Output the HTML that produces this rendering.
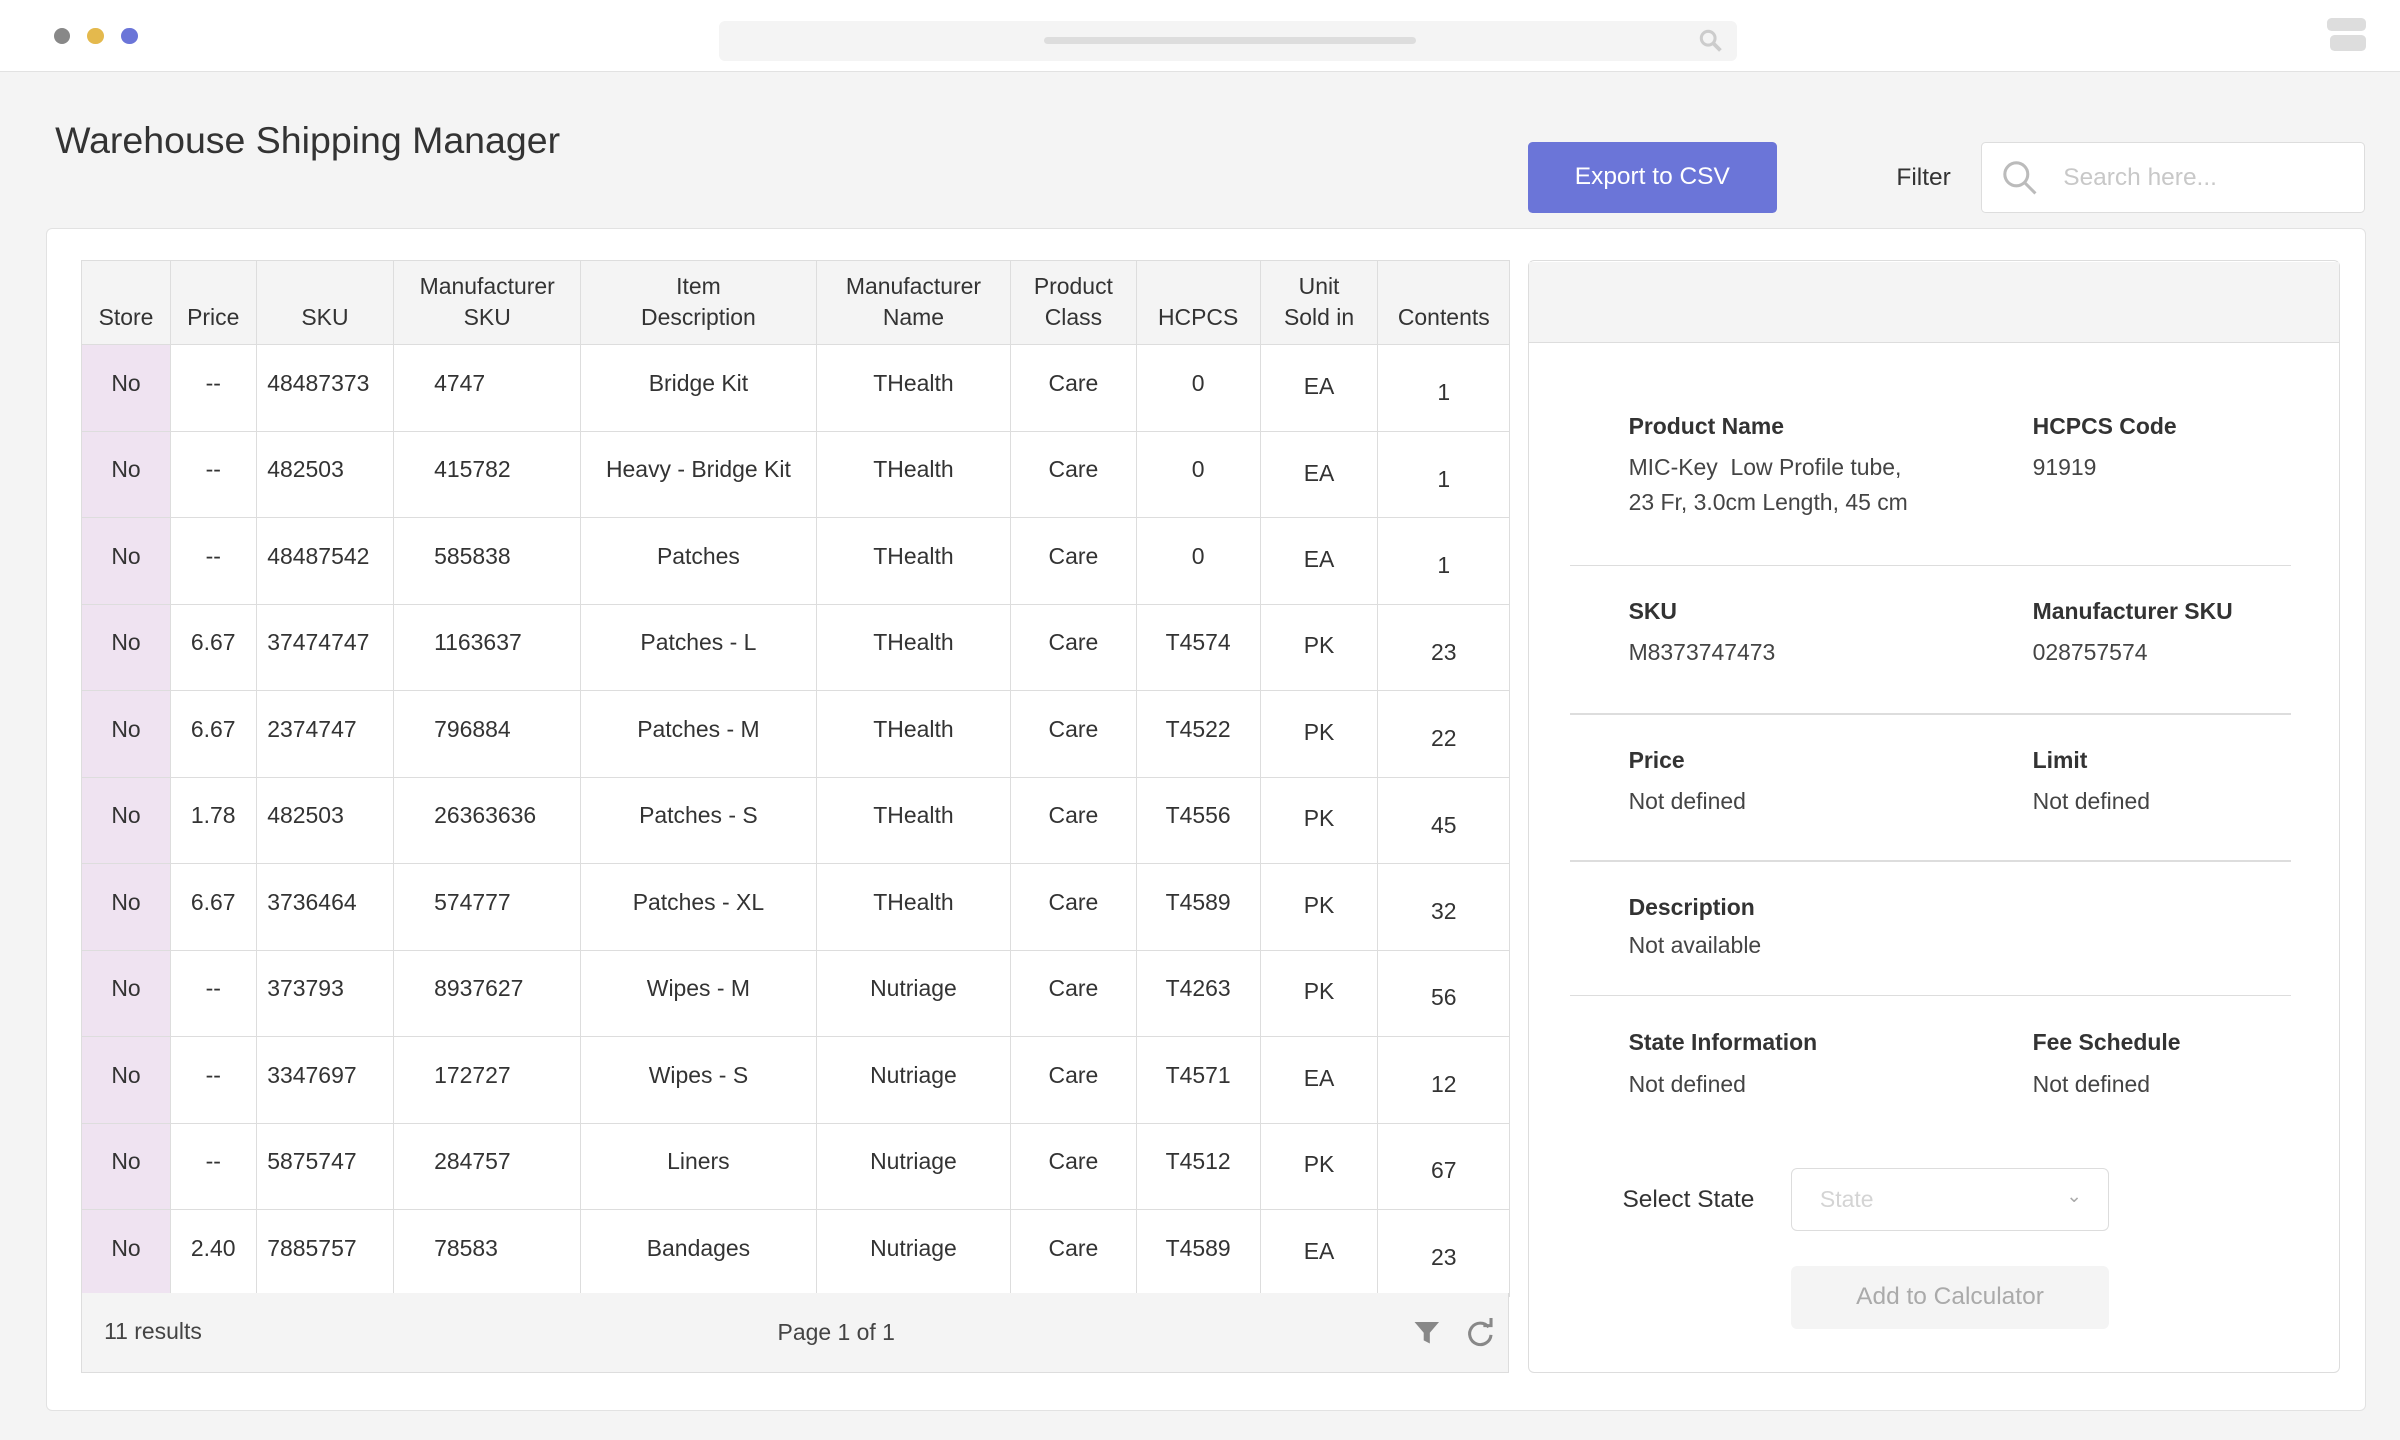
<!DOCTYPE html>
<html><head><meta charset="utf-8"><style>
*{box-sizing:border-box;margin:0;padding:0}
html,body{width:2400px;height:1440px;overflow:hidden;background:#f4f4f4}
#z{zoom:1.53061;width:1568px;height:941px;position:relative;font-family:"Liberation Sans",sans-serif;color:#333}
.a{position:absolute}
.top{left:0;top:0;width:1568px;height:47px;background:#fff;border-bottom:1px solid #e2e2e2}
.dot{width:11px;height:11px;border-radius:50%;top:18px}
table{border-collapse:collapse;position:absolute;left:53px;top:170px;font-size:15px;color:#333}
td,th{border:1px solid #ddd;text-align:center;font-weight:normal}
th{height:55px;background:#f4f4f4;vertical-align:bottom;padding-bottom:8px;line-height:20px}
td{height:56.5px;background:#fff;padding-bottom:6px}
td:first-child{background:#efe3f1}
td:nth-child(3){text-align:left;padding-left:7px}
td:nth-child(4){text-align:left;padding-left:26px}
td:nth-child(9){padding-bottom:2px}
td:nth-child(10){padding-bottom:0;padding-top:6px}
.lbl{font-size:15px;font-weight:bold;color:#333}
.val{font-size:15px;color:#444;line-height:23px}
.hr{left:1026px;width:471px;height:1px;background:#ddd}
</style></head><body><div id="z">
<div class="a top"></div>
<div class="a dot" style="left:35px;background:#888"></div>
<div class="a dot" style="left:57px;background:#e4b94d"></div>
<div class="a dot" style="left:79px;background:#6b75d8"></div>
<div class="a" style="left:470px;top:14px;width:665px;height:26px;background:#f4f4f4;border-radius:4px"></div>
<div class="a" style="left:682px;top:24px;width:243px;height:5px;background:#ddd;border-radius:3px"></div>
<svg class="a" style="left:1110px;top:19px" width="16" height="16"><circle cx="6" cy="6" r="4.5" fill="none" stroke="#ccc" stroke-width="2"/><path d="M9 9l5 5" stroke="#ccc" stroke-width="2.5"/></svg>
<div class="a" style="left:1520px;top:12px;width:26px;height:8px;background:#ddd;border-radius:3px"></div>
<div class="a" style="left:1522px;top:23px;width:24px;height:10px;background:#ddd;border-radius:3px"></div>
<div class="a" style="left:36px;top:78px;font-size:24.5px;color:#333">Warehouse Shipping Manager</div>
<div class="a" style="left:998px;top:93px;width:163px;height:46px;background:#6b75d8;border-radius:3px;color:#fff;font-size:16px;text-align:center;line-height:46px">Export to CSV</div>
<div class="a" style="left:1239px;top:107px;font-size:16px">Filter</div>
<div class="a" style="left:1294px;top:93px;width:251px;height:46px;background:#fff;border:1px solid #ddd;border-radius:3px"></div>
<svg class="a" style="left:1307px;top:104px" width="26" height="26"><circle cx="10" cy="10" r="7.5" fill="none" stroke="#bbb" stroke-width="2"/><path d="M15.5 15.5l7 7" stroke="#bbb" stroke-width="2"/></svg>
<div class="a" style="left:1348px;top:107px;font-size:16px;color:#c8c8c8">Search here...</div>
<div class="a" style="left:30px;top:149px;width:1516px;height:773px;background:#fff;border:1px solid #e2e2e2;border-radius:4px"></div>
<table>
<colgroup><col style="width:58px"><col style="width:56px"><col style="width:90px"><col style="width:122px"><col style="width:154px"><col style="width:127px"><col style="width:82px"><col style="width:81px"><col style="width:77px"><col style="width:86px"></colgroup>
<tr><th>Store</th><th>Price</th><th>SKU</th><th>Manufacturer<br>SKU</th><th>Item<br>Description</th><th>Manufacturer<br>Name</th><th>Product<br>Class</th><th>HCPCS</th><th>Unit<br>Sold in</th><th>Contents</th></tr>
<tr><td>No</td><td>--</td><td>48487373</td><td>4747</td><td>Bridge Kit</td><td>THealth</td><td>Care</td><td>0</td><td>EA</td><td>1</td></tr>
<tr><td>No</td><td>--</td><td>482503</td><td>415782</td><td>Heavy - Bridge Kit</td><td>THealth</td><td>Care</td><td>0</td><td>EA</td><td>1</td></tr>
<tr><td>No</td><td>--</td><td>48487542</td><td>585838</td><td>Patches</td><td>THealth</td><td>Care</td><td>0</td><td>EA</td><td>1</td></tr>
<tr><td>No</td><td>6.67</td><td>37474747</td><td>1163637</td><td>Patches - L</td><td>THealth</td><td>Care</td><td>T4574</td><td>PK</td><td>23</td></tr>
<tr><td>No</td><td>6.67</td><td>2374747</td><td>796884</td><td>Patches - M</td><td>THealth</td><td>Care</td><td>T4522</td><td>PK</td><td>22</td></tr>
<tr><td>No</td><td>1.78</td><td>482503</td><td>26363636</td><td>Patches - S</td><td>THealth</td><td>Care</td><td>T4556</td><td>PK</td><td>45</td></tr>
<tr><td>No</td><td>6.67</td><td>3736464</td><td>574777</td><td>Patches - XL</td><td>THealth</td><td>Care</td><td>T4589</td><td>PK</td><td>32</td></tr>
<tr><td>No</td><td>--</td><td>373793</td><td>8937627</td><td>Wipes - M</td><td>Nutriage</td><td>Care</td><td>T4263</td><td>PK</td><td>56</td></tr>
<tr><td>No</td><td>--</td><td>3347697</td><td>172727</td><td>Wipes - S</td><td>Nutriage</td><td>Care</td><td>T4571</td><td>EA</td><td>12</td></tr>
<tr><td>No</td><td>--</td><td>5875747</td><td>284757</td><td>Liners</td><td>Nutriage</td><td>Care</td><td>T4512</td><td>PK</td><td>67</td></tr>
<tr><td>No</td><td>2.40</td><td>7885757</td><td>78583</td><td>Bandages</td><td>Nutriage</td><td>Care</td><td>T4589</td><td>EA</td><td>23</td></tr>
</table>
<div class="a" style="left:53px;top:845px;width:933px;height:52px;background:#f4f4f4;border:1px solid #ddd;border-top:none"></div>
<div class="a" style="left:68px;top:861px;font-size:15px;color:#444">11 results</div>
<div class="a" style="left:508px;top:862px;font-size:15px;color:#444">Page 1 of 1</div>
<svg class="a" style="left:923px;top:862px" width="18" height="18"><path d="M1 2h16l-6 7v7l-4-2v-5z" fill="#888"/></svg>
<svg class="a" style="left:957px;top:861px" width="20" height="20"><path d="M15.5 6A7 7 0 1 0 17 11" fill="none" stroke="#888" stroke-width="2"/><path d="M12 5h5V0" fill="none" stroke="#888" stroke-width="2"/></svg>
<div class="a" style="left:998px;top:170px;width:531px;height:727px;background:#fff;border:1px solid #ddd;border-radius:4px"></div>
<div class="a" style="left:999px;top:171px;width:529px;height:53px;background:#f4f4f4;border-bottom:1px solid #ddd"></div>
<div class="a lbl" style="left:1064px;top:270px">Product Name</div>
<div class="a val" style="left:1064px;top:294px">MIC-Key&nbsp; Low Profile tube,<br>23 Fr, 3.0cm Length, 45 cm</div>
<div class="a lbl" style="left:1328px;top:270px">HCPCS Code</div>
<div class="a val" style="left:1328px;top:294px">91919</div>
<div class="a hr" style="top:369px"></div>
<div class="a lbl" style="left:1064px;top:391px">SKU</div>
<div class="a val" style="left:1064px;top:415px">M8373747473</div>
<div class="a lbl" style="left:1328px;top:391px">Manufacturer SKU</div>
<div class="a val" style="left:1328px;top:415px">028757574</div>
<div class="a hr" style="top:466px"></div>
<div class="a lbl" style="left:1064px;top:488px">Price</div>
<div class="a val" style="left:1064px;top:512px">Not defined</div>
<div class="a lbl" style="left:1328px;top:488px">Limit</div>
<div class="a val" style="left:1328px;top:512px">Not defined</div>
<div class="a hr" style="top:562px"></div>
<div class="a lbl" style="left:1064px;top:584px">Description</div>
<div class="a val" style="left:1064px;top:606px">Not available</div>
<div class="a hr" style="top:650px"></div>
<div class="a lbl" style="left:1064px;top:672px">State Information</div>
<div class="a val" style="left:1064px;top:697px">Not defined</div>
<div class="a lbl" style="left:1328px;top:672px">Fee Schedule</div>
<div class="a val" style="left:1328px;top:697px">Not defined</div>
<div class="a" style="left:1060px;top:775px;font-size:16px;color:#333">Select State</div>
<div class="a" style="left:1170px;top:763px;width:208px;height:41px;border:1px solid #ddd;border-radius:4px;background:#fff"></div>
<div class="a" style="left:1189px;top:775px;font-size:15px;color:#d4d4d4">State</div>
<div class="a" style="left:1350px;top:774px;font-size:12px;color:#aaa">&#8964;</div>
<div class="a" style="left:1170px;top:827px;width:208px;height:41px;background:#f4f4f4;border-radius:4px;color:#aaa;font-size:16px;text-align:center;line-height:41px">Add to Calculator</div>
</div></body></html>
